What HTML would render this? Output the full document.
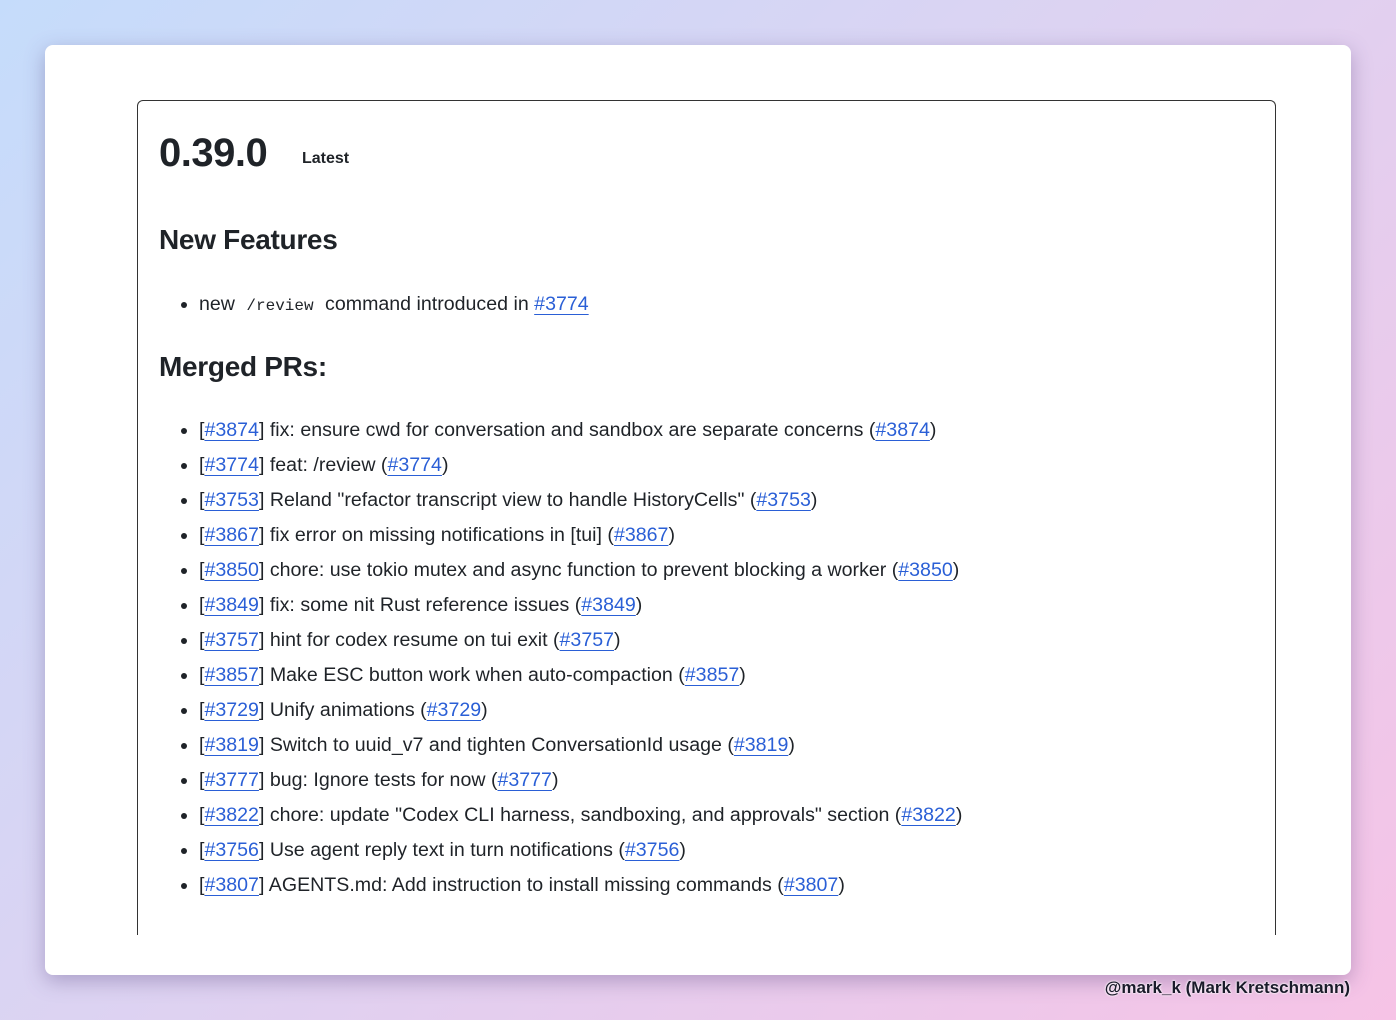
<!DOCTYPE html>
<html><head><meta charset="utf-8"><style>
html,body{margin:0;padding:0;}
body{width:1396px;height:1020px;position:relative;overflow:hidden;background:linear-gradient(135deg,#c5dcfb 0%,#dcd3f2 45%,#f6c3e6 100%);font-family:"Liberation Sans",sans-serif;color:#1f2328;}
.card{position:absolute;left:45px;top:45px;width:1306px;height:930px;background:#fff;border-radius:8px;box-shadow:0 6px 20px rgba(80,60,120,.35);overflow:hidden;}
.box{position:absolute;left:92px;top:55px;width:1137px;height:834px;border:1px solid #333;border-bottom:none;border-radius:6px 6px 0 0;}
.ver{position:absolute;left:21px;top:30px;font-size:40px;font-weight:bold;letter-spacing:-0.5px;}
.latest{position:absolute;left:164px;top:49px;font-size:16px;font-weight:bold;}
h2{position:absolute;left:21px;margin:0;font-size:28px;font-weight:bold;letter-spacing:-0.3px;}
ul{position:absolute;left:21px;margin:0;padding:0 0 0 40px;font-size:19.6px;}
li{height:35px;line-height:35px;}
a{color:#2a5fd6;text-decoration:underline;text-underline-offset:4px;}
code{font-family:"Liberation Mono",monospace;font-size:16px;padding:0 6px;}
.sig{position:absolute;right:46px;top:978px;font-size:17px;font-weight:bold;color:#1a1a2a;text-shadow:0 0 2px #fff,0 0 2px #fff;}
</style></head><body>
<div class="card"><div class="box">
<div class="ver">0.39.0</div><div class="latest">Latest</div>
<h2 style="top:123px">New Features</h2>
<ul style="top:186px"><li>new <code>/review</code> command introduced in <a>#3774</a></li></ul>
<h2 style="top:250px">Merged PRs:</h2>
<ul style="top:312px">
<li>[<a>#3874</a>] fix: ensure cwd for conversation and sandbox are separate concerns (<a>#3874</a>)</li>
<li>[<a>#3774</a>] feat: /review (<a>#3774</a>)</li>
<li>[<a>#3753</a>] Reland "refactor transcript view to handle HistoryCells" (<a>#3753</a>)</li>
<li>[<a>#3867</a>] fix error on missing notifications in [tui] (<a>#3867</a>)</li>
<li>[<a>#3850</a>] chore: use tokio mutex and async function to prevent blocking a worker (<a>#3850</a>)</li>
<li>[<a>#3849</a>] fix: some nit Rust reference issues (<a>#3849</a>)</li>
<li>[<a>#3757</a>] hint for codex resume on tui exit (<a>#3757</a>)</li>
<li>[<a>#3857</a>] Make ESC button work when auto-compaction (<a>#3857</a>)</li>
<li>[<a>#3729</a>] Unify animations (<a>#3729</a>)</li>
<li>[<a>#3819</a>] Switch to uuid_v7 and tighten ConversationId usage (<a>#3819</a>)</li>
<li>[<a>#3777</a>] bug: Ignore tests for now (<a>#3777</a>)</li>
<li>[<a>#3822</a>] chore: update "Codex CLI harness, sandboxing, and approvals" section (<a>#3822</a>)</li>
<li>[<a>#3756</a>] Use agent reply text in turn notifications (<a>#3756</a>)</li>
<li>[<a>#3807</a>] AGENTS.md: Add instruction to install missing commands (<a>#3807</a>)</li>
</ul>
</div></div>
<div class="sig">@mark_k (Mark Kretschmann)</div>
</body></html>
